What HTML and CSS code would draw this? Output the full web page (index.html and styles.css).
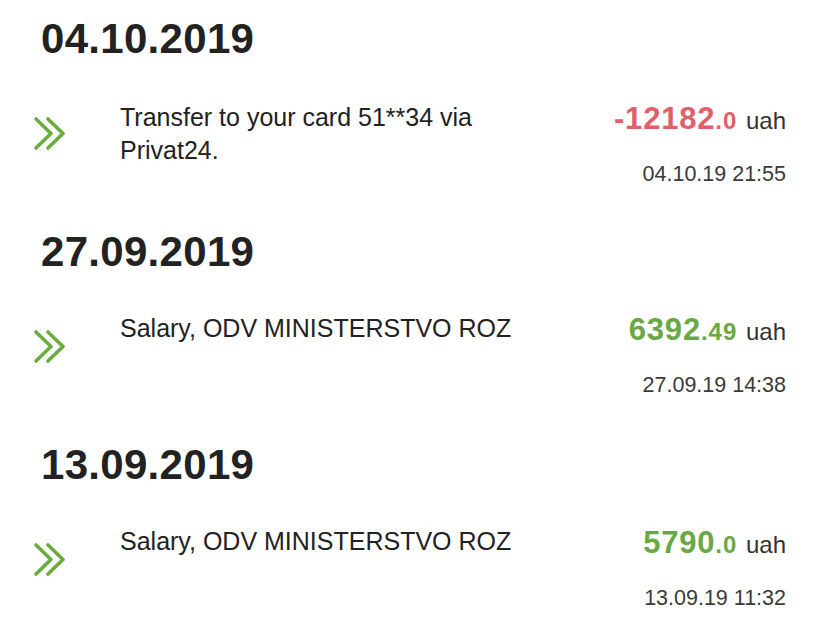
FILE: index.html
```html
<!DOCTYPE html>
<html lang="en">
<head>
<meta charset="utf-8">
<title>Transactions</title>
<link rel="stylesheet" href="styles.css">
</head>
<body>
<main class="feed">
  <section class="day">
    <h2 class="day-title">04.10.2019</h2>
    <div class="txn txn-tall">
      <svg class="chev" viewBox="0 0 32 35" aria-hidden="true"><polyline points="3,3 18,17.5 3,32"/><polyline points="15,3 30,17.5 15,32"/></svg>
      <p class="desc">Transfer to your card 51**34 via Privat24.</p>
      <div class="meta">
        <div class="amount neg"><b class="int">-12182</b><b class="frac">.0</b> <span class="cur">uah</span></div>
        <div class="time">04.10.19 21:55</div>
      </div>
    </div>
  </section>
  <section class="day">
    <h2 class="day-title">27.09.2019</h2>
    <div class="txn">
      <svg class="chev" viewBox="0 0 32 35" aria-hidden="true"><polyline points="3,3 18,17.5 3,32"/><polyline points="15,3 30,17.5 15,32"/></svg>
      <p class="desc">Salary, ODV MINISTERSTVO ROZ</p>
      <div class="meta">
        <div class="amount pos"><b class="int">6392</b><b class="frac">.49</b> <span class="cur">uah</span></div>
        <div class="time">27.09.19 14:38</div>
      </div>
    </div>
  </section>
  <section class="day">
    <h2 class="day-title">13.09.2019</h2>
    <div class="txn">
      <svg class="chev" viewBox="0 0 32 35" aria-hidden="true"><polyline points="3,3 18,17.5 3,32"/><polyline points="15,3 30,17.5 15,32"/></svg>
      <p class="desc">Salary, ODV MINISTERSTVO ROZ</p>
      <div class="meta">
        <div class="amount pos"><b class="int">5790</b><b class="frac">.0</b> <span class="cur">uah</span></div>
        <div class="time">13.09.19 11:32</div>
      </div>
    </div>
  </section>
</main>
</body>
</html>
```

FILE: styles.css
```css
* { box-sizing: border-box; }

html, body {
  margin: 0;
  padding: 0;
  background: #ffffff;
}

body {
  font-family: "Liberation Sans", Arial, "Helvetica Neue", sans-serif;
  color: #222222;
}

.feed {
  padding-top: 15px;
  display: flex;
  flex-direction: column;
  gap: 43px;
}

.day-title {
  margin: 0 0 0 41px;
  font-size: 42px;
  line-height: 48px;
  font-weight: 700;
  letter-spacing: 0.3px;
  color: #222222;
}

.txn {
  margin-top: 36px;
  display: flex;
  align-items: flex-start;
  padding: 0 42px 0 33px;
}

.txn-tall {
  margin-top: 38px;
  margin-bottom: -2px;
}

.chev {
  flex: none;
  width: 32px;
  height: 35px;
  margin-top: 17px;
  fill: none;
  stroke: #6aad3e;
  stroke-width: 3.6;
  stroke-linecap: round;
  stroke-linejoin: round;
}

.txn-tall .chev { margin-top: 15px; }

.desc {
  flex: none;
  width: 420px;
  margin: 0 0 0 55px;
  font-size: 25px;
  line-height: 33px;
  color: #222222;
}

.meta {
  margin-left: auto;
  text-align: right;
}

.amount {
  font-size: 31px;
  line-height: 36px;
  white-space: nowrap;
}

.amount b, .amount span { line-height: 1; }

.int {
  font-weight: 700;
  letter-spacing: 0.8px;
}

.frac {
  font-size: 24px;
  font-weight: 700;
  letter-spacing: 1px;
}

.cur {
  font-size: 24px;
  font-weight: 400;
  color: #333333;
}

.neg .int, .neg .frac { color: #e0606a; }
.pos .int, .pos .frac { color: #69a845; }

.time {
  margin-top: 24px;
  font-size: 21.5px;
  line-height: 26px;
  color: #3a3a3a;
  white-space: nowrap;
}
```
